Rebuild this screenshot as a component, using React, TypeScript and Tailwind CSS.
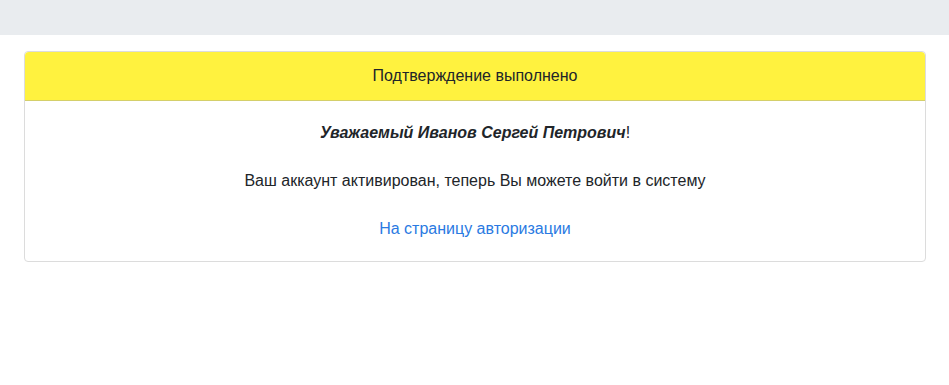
export default function App() {
  return (
    <div className="min-h-screen bg-white font-['Liberation_Sans',Arial,sans-serif] text-[16px] leading-6 text-[#212529]">
      {/* верхняя полоса */}
      <div className="h-[35px] bg-[#e9ecef]" />

      <div className="pl-6 pr-[23px] pt-4">
        <div className="rounded border border-[#dcdcdc] bg-white">
          <div className="rounded-t border-b border-[#d4cf6a] bg-[#fff23f] py-3 text-center">
            Подтверждение выполнено
          </div>
          <div className="p-5 text-center">
            <p className="mb-6">
              <b className="italic">Уважаемый Иванов Сергей Петрович</b>!
            </p>
            <p className="mb-6">Ваш аккаунт активирован, теперь Вы можете войти в систему</p>
            <p>
              <a href="#" className="text-[#2a7ae2]">
                На страницу авторизации
              </a>
            </p>
          </div>
        </div>
      </div>
    </div>
  );
}
